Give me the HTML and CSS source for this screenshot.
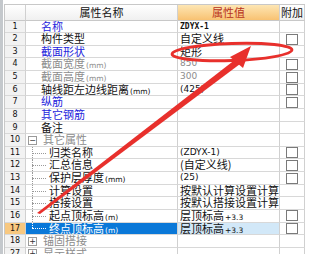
FILE: index.html
```html
<!DOCTYPE html>
<html>
<head>
    <title>属性编辑</title>
    <link rel="stylesheet" href="styles.css">
</head>
<body>
    <div class="frame">
        <div class="grid">
            <div class="cell num head"></div>
            <div class="cell name head">属性名称</div>
            <div class="cell value head">属性值</div>
            <div class="cell attach head">附加</div>

            <div class="cell num">1</div>
            <div class="cell name blue">名称</div>
            <div class="cell value code">ZDYX-1</div>
            <div class="cell attach"></div>

            <div class="cell num">2</div>
            <div class="cell name">构件类型</div>
            <div class="cell value">自定义线</div>
            <div class="cell attach"><span class="box"></span></div>

            <div class="cell num">3</div>
            <div class="cell name blue">截面形状</div>
            <div class="cell value">矩形</div>
            <div class="cell attach"></div>

            <div class="cell num">4</div>
            <div class="cell name gray">截面宽度<span class="unit">(mm)</span></div>
            <div class="cell value gray small">850</div>
            <div class="cell attach"><span class="box"></span></div>

            <div class="cell num">5</div>
            <div class="cell name gray">截面高度<span class="unit">(mm)</span></div>
            <div class="cell value gray small">300</div>
            <div class="cell attach"><span class="box"></span></div>

            <div class="cell num">6</div>
            <div class="cell name">轴线距左边线距离<span class="unit">(mm)</span></div>
            <div class="cell value small">(425)</div>
            <div class="cell attach"><span class="box"></span></div>

            <div class="cell num">7</div>
            <div class="cell name blue">纵筋</div>
            <div class="cell value"></div>
            <div class="cell attach"><span class="box"></span></div>

            <div class="cell num">8</div>
            <div class="cell name blue">其它钢筋</div>
            <div class="cell value"></div>
            <div class="cell attach"></div>

            <div class="cell num">9</div>
            <div class="cell name">备注</div>
            <div class="cell value"></div>
            <div class="cell attach"></div>

            <div class="cell num">10</div>
            <div class="cell name group gray"><span class="toggle">−</span>其它属性</div>
            <div class="cell value"></div>
            <div class="cell attach"></div>

            <div class="cell num">11</div>
            <div class="cell name child">归类名称</div>
            <div class="cell value small">(ZDYX-1)</div>
            <div class="cell attach"><span class="box"></span></div>

            <div class="cell num">12</div>
            <div class="cell name child">汇总信息</div>
            <div class="cell value">(自定义线)</div>
            <div class="cell attach"><span class="box"></span></div>

            <div class="cell num">13</div>
            <div class="cell name child">保护层厚度<span class="unit">(mm)</span></div>
            <div class="cell value small">(25)</div>
            <div class="cell attach"><span class="box"></span></div>

            <div class="cell num">14</div>
            <div class="cell name child">计算设置</div>
            <div class="cell value">按默认计算设置计算</div>
            <div class="cell attach"></div>

            <div class="cell num">15</div>
            <div class="cell name child">搭接设置</div>
            <div class="cell value">按默认搭接设置计算</div>
            <div class="cell attach"></div>

            <div class="cell num">16</div>
            <div class="cell name child">起点顶标高<span class="unit">(m)</span></div>
            <div class="cell value">层顶标高<span class="unit">+3.3</span></div>
            <div class="cell attach"><span class="box"></span></div>

            <div class="cell num active">17</div>
            <div class="cell name child last selected">终点顶标高<span class="unit">(m)</span></div>
            <div class="cell value selected-value">层顶标高<span class="unit">+3.3</span></div>
            <div class="cell attach"><span class="box"></span></div>

            <div class="cell num">18</div>
            <div class="cell name group gray"><span class="toggle">+</span>锚固搭接</div>
            <div class="cell value"></div>
            <div class="cell attach"></div>

            <div class="cell num">27</div>
            <div class="cell name group gray"><span class="toggle">+</span>显示样式</div>
            <div class="cell value"></div>
            <div class="cell attach"></div>
        </div>

        <!-- red marks drawn over the grid -->
        <svg class="marks" width="318" height="254" viewBox="0 0 318 254">
            <ellipse cx="232" cy="52" rx="60" ry="8.5" fill="none" stroke="#e8302c" stroke-width="2.8" transform="rotate(-2 232 52)"/>
            <polygon points="37,213 40,214 240,64 236,59" fill="#e8302c"/>
            <polygon points="251,46 230,57 243,68" fill="#e8302c"/>
        </svg>
    </div>
</body>
</html>
```

FILE: styles.css
```css
body {
    margin: 0;
    background: #ffffff;
    font-family: "Noto Sans CJK SC", "Liberation Sans", sans-serif;
    font-size: 11px;
    color: #111111;
}
.frame {
    position: relative;
    width: 318px;
    height: 254px;
    overflow: hidden;
    border-left: 3px solid #c4c8cc;
    box-sizing: border-box;
    padding: 4px 0 0 1px;
}
.grid {
    display: grid;
    grid-template-columns: 21px 152px 102px 25px;
    grid-template-rows: 15.6px;
    grid-auto-rows: 12.625px;
    width: 300px;
    border-top: 1px solid #c8c8c8;
    border-left: 1px solid #c8c8c8;
}
.cell {
    border-right: 1px solid #d0d0d0;
    border-bottom: 1px solid #d8d8d8;
    white-space: nowrap;
    line-height: 11.6px;
}
.head {
    text-align: center;
    background: linear-gradient(#ffffff, #f0f0f0);
    line-height: 14.6px;
    border-bottom-color: #c8c8c8;
}
.value.head {
    background: linear-gradient(#fde6b4, #f8c272);
    color: #b8321c;
}
.num {
    text-align: center;
    background: #f2f2f2;
    font-family: "DejaVu Sans", sans-serif;
    font-size: 8px;
}
.num.head {
    background: linear-gradient(#ffffff, #f0f0f0);
}
.num.active {
    background: #f8c880;
}
.name {
    padding-left: 15px;
}
.name.head {
    padding-left: 0;
}
.value {
    padding-left: 2px;
}
.value.head {
    padding-left: 0;
}
.attach {
    text-align: center;
}
.blue {
    color: #2424dc;
}
.gray {
    color: #8c8c8c;
}
.code {
    font-family: "DejaVu Sans Mono", monospace;
    font-weight: bold;
    font-size: 8px;
}
.small {
    font-family: "DejaVu Sans", sans-serif;
    font-size: 9px;
}
.unit {
    font-family: "DejaVu Sans", sans-serif;
    font-size: 7.5px;
    margin-left: 1px;
}
.box {
    display: inline-block;
    vertical-align: middle;
    width: 10px;
    height: 9px;
    margin-top: -2px;
    border: 1px solid #7a7a7a;
    background: #ffffff;
}
.group {
    padding-left: 2px;
}
.toggle {
    display: inline-block;
    vertical-align: middle;
    width: 7px;
    height: 7px;
    margin-top: -2px;
    border: 1px solid #9a9a9a;
    background: #ffffff;
    color: #333333;
    font-family: "DejaVu Sans", sans-serif;
    font-size: 8px;
    line-height: 7px;
    text-align: center;
    margin-right: 6px;
}
.child {
    position: relative;
    padding-left: 23px;
}
.child::before {
    content: "";
    position: absolute;
    left: 6px;
    top: 0;
    bottom: 0;
    border-left: 1px dotted #9a9a9a;
}
.child::after {
    content: "";
    position: absolute;
    left: 6px;
    width: 14px;
    top: 50%;
    border-top: 1px dotted #9a9a9a;
}
.child.last::before {
    bottom: 50%;
}
.selected {
    background: #0a78d8;
    color: #ffffff;
}
.selected::before,
.selected::after {
    border-color: #ffffff;
}
.selected-value {
    background: #d2e8f8;
}
.marks {
    position: absolute;
    left: -3px;
    top: 0;
}
```
